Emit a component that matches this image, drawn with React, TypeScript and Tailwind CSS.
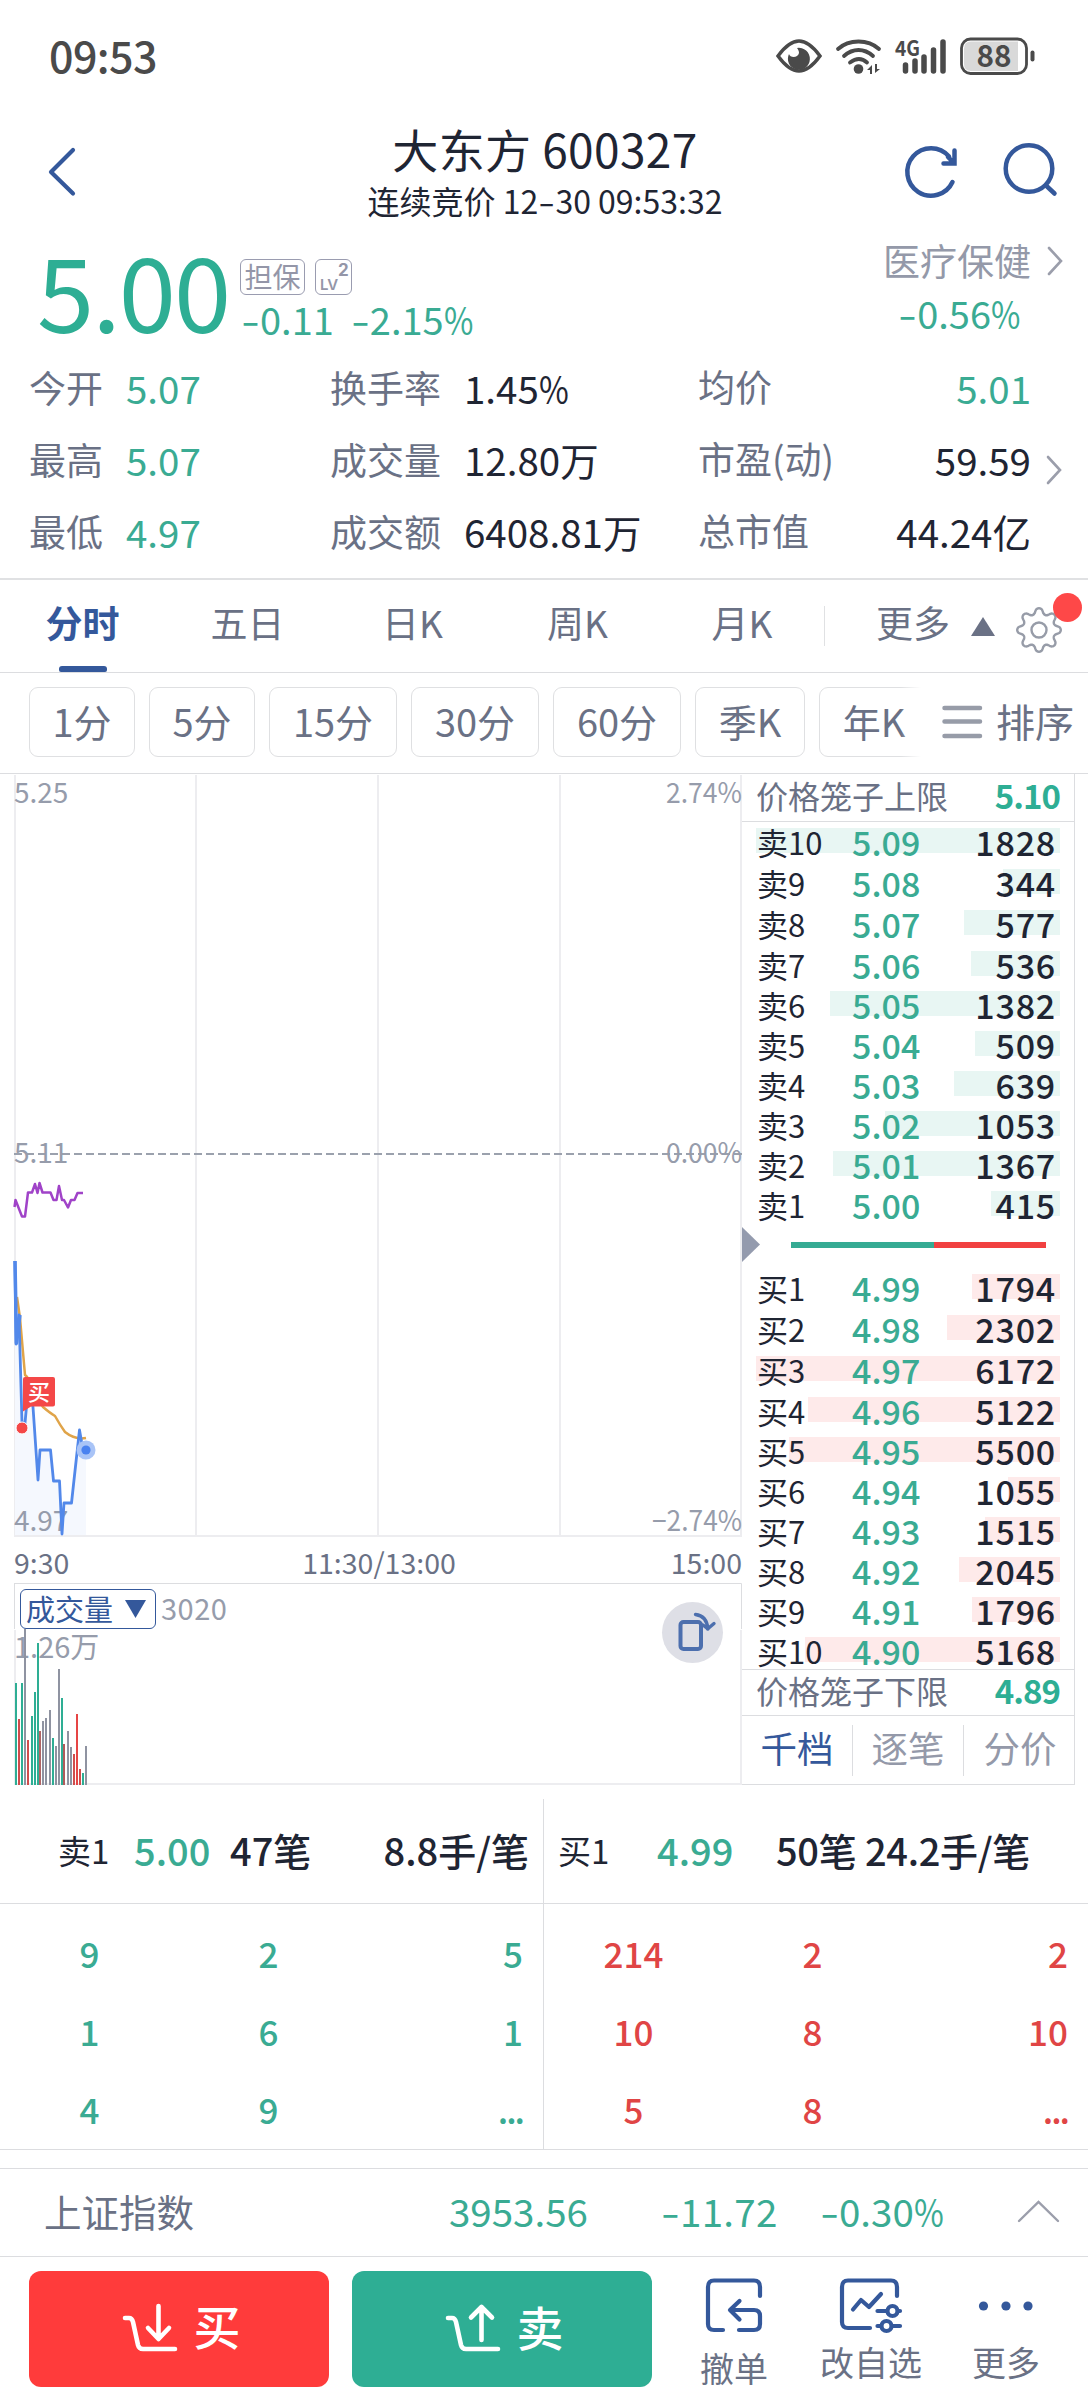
import type { ReactNode } from "react";

const GREEN = "#2eae94";
const GRAY = "#8f93a1";
const RED = "#d04c4c";

type Level = { name: string; price: string; qty: number };

const SELLS: Level[] = [
  { name: "卖10", price: "5.09", qty: 1828 },
  { name: "卖9", price: "5.08", qty: 344 },
  { name: "卖8", price: "5.07", qty: 577 },
  { name: "卖7", price: "5.06", qty: 536 },
  { name: "卖6", price: "5.05", qty: 1382 },
  { name: "卖5", price: "5.04", qty: 509 },
  { name: "卖4", price: "5.03", qty: 639 },
  { name: "卖3", price: "5.02", qty: 1053 },
  { name: "卖2", price: "5.01", qty: 1367 },
  { name: "卖1", price: "5.00", qty: 415 },
];

const BUYS: Level[] = [
  { name: "买1", price: "4.99", qty: 1794 },
  { name: "买2", price: "4.98", qty: 2302 },
  { name: "买3", price: "4.97", qty: 6172 },
  { name: "买4", price: "4.96", qty: 5122 },
  { name: "买5", price: "4.95", qty: 5500 },
  { name: "买6", price: "4.94", qty: 1055 },
  { name: "买7", price: "4.93", qty: 1515 },
  { name: "买8", price: "4.92", qty: 2045 },
  { name: "买9", price: "4.91", qty: 1796 },
  { name: "买10", price: "4.90", qty: 5168 },
];

// [x, height, colour] of each minute's volume
const VOLUMES: [number, number, string][] = [
  [15, 102, GREEN], [18, 66, RED], [21, 102, GREEN], [24, 156, GRAY], [27, 45, RED],
  [31, 69, GREEN], [34, 93, GREEN], [37, 142, GREEN], [39, 54, "#b06464"], [42, 64, GRAY],
  [45, 67, GRAY], [49, 75, GRAY], [52, 47, GREEN], [55, 39, GRAY], [58, 116, GRAY],
  [61, 87, GREEN], [63, 41, "#b05c5c"], [67, 54, GRAY], [70, 38, GRAY], [73, 31, RED],
  [76, 71, "#e64545"], [79, 16, RED], [82, 12, GREEN], [85, 39, GRAY],
];

function StatusBar() {
  return (
    <div className="flex h-[109px] items-center pl-[49px] text-[#4a4a4a]">
      <div className="w-[727px] text-[43px] font-medium leading-none tracking-[-0.600px]">09:53</div>
      <svg className="mt-[4px] overflow-visible" width="262" height="40" viewBox="0 0 262 40" fill="none">
        <path d="M2 19C10 8 17 4 23 4S36 8 44 19C36 30 29 34 23 34S10 30 2 19Z" stroke="#4a4a4a" strokeWidth="3.5" />
        <path d="M21 11a11 11 0 1 1-8 6c1 4 9 4 10-1 0-2-1-4-2-5Z" fill="#4a4a4a" />
        <path d="M62 12C73 2 92 2 103 12M68 19C77 11 88 11 97 19M74 25.500C80 21 86 21 91 25.500" stroke="#4a4a4a" strokeWidth="3.800" strokeLinecap="round" />
        <circle cx="82.500" cy="32" r="4.800" fill="#4a4a4a" />
        <path d="M91 33l5-5v9h-2v-4zM99 27v9l5-4h-3v-5z" fill="#4a4a4a" />
        <text x="119" y="18.500" fontSize="21" fontWeight="700" fill="#4a4a4a" textLength="25" lengthAdjust="spacingAndGlyphs">4G</text>
        <path d="M129.500 28v6M139 24v10M148 20v14M157.500 13v21M167 5v29" stroke="#4a4a4a" strokeWidth="5.500" strokeLinecap="round" />
        <rect x="185.500" y="2" width="65" height="34.500" rx="9" stroke="#4a4a4a" strokeWidth="2.800" />
        <path d="M195 4.500H242V34H195Q188 34 188 27V11.500Q188 4.500 195 4.500Z" fill="#d9d9d9" />
        <rect x="254.500" y="13.500" width="4" height="11" rx="2" fill="#4a4a4a" />
        <text x="218" y="30" textAnchor="middle" fontSize="31" fontWeight="700" fill="#4a4a4a" textLength="35" lengthAdjust="spacingAndGlyphs">88</text>
      </svg>
    </div>
  );
}

function Header() {
  return (
    <div className="flex h-[125px] items-start text-[#1f2533]">
      <div className="w-[273px] pl-[47px] pt-[37px]">
        <svg width="30" height="52" viewBox="0 0 30 52" fill="none">
          <path d="M26 4L4 26L26 47.500" stroke="#34589b" strokeWidth="4.200" strokeLinecap="round" strokeLinejoin="round" />
        </svg>
      </div>
      <div className="flex w-[544px] flex-col items-center gap-[13px] pt-[16px]">
        <div className="whitespace-pre text-[46px] leading-none tracking-[0.400px]">大东方 600327</div>
        <div className="whitespace-pre text-[32px] leading-[33px]">
          连续竞价 12<span className="mx-[3px] inline-block scale-x-150">-</span>30 09:53:32
        </div>
      </div>
      <div className="flex w-[271px] justify-end gap-[42px] pr-[29px] pt-[33px]">
        <svg width="58" height="60" viewBox="0 0 58 60" fill="none" stroke="#34589b" strokeWidth="4.500" strokeLinecap="round">
          <path d="M52.500 40A23.700 23.700 0 1 1 49 14.500" />
          <path d="M54.500 8.500V21.500H43.500M48 15L54 21" strokeLinejoin="miter" />
        </svg>
        <svg width="59" height="60" viewBox="0 0 59 60" fill="none" stroke="#34589b" strokeWidth="4.500" strokeLinecap="round">
          <circle cx="29" cy="26.500" r="23.300" />
          <path d="M46 43.500L54.500 51.500" />
        </svg>
      </div>
    </div>
  );
}

function Chevron() {
  return (
    <svg width="18" height="30" viewBox="0 0 18 30" fill="none">
      <path d="M3 2L15 15L3 28" stroke="#9b9eab" strokeWidth="2.600" strokeLinecap="round" />
    </svg>
  );
}

function Minus() {
  return <span className="mr-[1px] inline-block w-[17px] scale-x-[1.4] text-center">-</span>;
}

function Pct() {
  return <span className="mr-[-6px] inline-block origin-left scale-x-[0.84]">%</span>;
}

function Quote() {
  return (
    <div className="flex h-[116px] items-start">
      <div className="w-[240px] shrink-0 pl-[37px] pt-[3px] text-[103px] leading-none tracking-[-2px] text-[#2eae94]">5.00</div>
      <div className="w-[600px] shrink-0 pt-[25px]">
        <div className="flex gap-[10px]">
          <div className="flex h-[36px] w-[65px] items-center justify-center rounded-[6px] border border-[#9a9cb0] pb-[3px] text-[28px] leading-none text-[#9496a8]">担保</div>
          <div className="relative h-[36px] w-[37px] rounded-[6px] border border-[#9a9cb0] text-[#9496a8]">
            <span className="absolute left-[4px] top-[17px] font-[Inter] text-[15px] font-semibold leading-none">LV</span>
            <span className="absolute left-[22px] top-[2px] font-[Inter] text-[17px] font-bold leading-none">2</span>
          </div>
        </div>
        <div className="flex gap-[18px] pl-[2px] pt-[5px] text-[38px] leading-none text-[#3aab93]">
          <span><Minus />0.11</span>
          <span><Minus />2.15<Pct /></span>
        </div>
      </div>
      <div className="flex-1 text-[37px] leading-none">
        <div className="flex items-center justify-end gap-[15px] pr-[24px] pt-[8px]">
          <span className="whitespace-nowrap text-[#9499a9]">医疗保健</span>
          <Chevron />
        </div>
        <div className="pr-[68px] pt-[15px] text-right text-[38px] text-[#3aab93]"><Minus />0.56<Pct /></div>
      </div>
    </div>
  );
}

function Stats() {
  const rows: [string, string, string, ReactNode, string, string][] = [
    ["今开", "5.07", "换手率", <>1.45<Pct /></>, "均价", "5.01"],
    ["最高", "5.07", "成交量", "12.80万", "市盈(动)", "59.59"],
    ["最低", "4.97", "成交额", "6408.81万", "总市值", "44.24亿"],
  ];
  return (
    <div className="flex h-[230px] border-b-2 border-[#e0e1e3] pl-[29px] pt-[1px]">
      <div className="flex-1">
        {rows.map((r, i) => (
          <div key={r[2]} className="grid h-[72px] grid-cols-[97px_204px_134px_234px_1fr] items-center text-[38.500px] leading-none text-[#1f2533]">
            <span className="text-[37px] text-[#6a7185]">{r[0]}</span>
            <span className="text-[#3aab93]">{r[1]}</span>
            <span className="text-[37px] text-[#6a7185]">{r[2]}</span>
            <span>{r[3]}</span>
            <span className="flex justify-between">
              <span className="text-[37px] text-[#6a7185]">{r[4]}</span>
              <span className={i === 0 ? "text-[#3aab93]" : ""}>{r[5]}</span>
            </span>
          </div>
        ))}
      </div>
      <div className="flex w-[57px] items-start pl-[14px] pt-[104px]"><Chevron /></div>
    </div>
  );
}

function Gear() {
  const pts: string[] = [];
  const n = 128;
  for (let i = 0; i < n; i++) {
    const a = (i / n) * Math.PI * 2;
    const wave = Math.cos(a * 8);
    const r = 19 + 2.8 * Math.sign(wave) * Math.pow(Math.abs(wave), 0.65);
    pts.push(`${(24 + r * Math.sin(a)).toFixed(2)},${(24 - r * Math.cos(a)).toFixed(2)}`);
  }
  return (
    <svg width="48" height="48" viewBox="0 0 48 48" fill="none" stroke="#979ca8" strokeWidth="2.400" strokeLinejoin="round">
      <polygon points={pts.join(" ")} />
      <circle cx="24" cy="24" r="7.500" />
    </svg>
  );
}

function PeriodTabs() {
  return (
    <div className="grid h-[93px] grid-cols-[165px_165px_165px_165px_164px_1fr] border-b border-[#dcdde0] text-[37px] leading-none text-[#6a7185]">
      <div className="flex flex-col items-center justify-between pt-[24px] font-bold text-[#34589b]">
        分时
        <div className="h-[6px] w-[48px] rounded-t-[3px] rounded-b-[2px] bg-[#34589b]" />
      </div>
      <div className="pt-[24px] text-center">五日</div>
      <div className="pt-[24px] text-center">日K</div>
      <div className="pt-[24px] text-center">周K</div>
      <div className="pt-[24px] text-center">月K</div>
      <div className="flex items-start">
        <div className="mt-[26px] h-[40px] w-px bg-[#e0e1e3]" />
        <span className="ml-[51px] pt-[24px]">更多</span>
        <svg className="ml-[21px] mt-[37px]" width="24" height="19"><path d="M12 0L24 19H0Z" fill="#6a7185" /></svg>
        <div className="relative ml-[20px] mt-[26px]">
          <Gear />
          <div className="absolute left-[38px] top-[-13px] h-[29px] w-[29px] rounded-full bg-[#fe4848]" />
        </div>
      </div>
    </div>
  );
}

function Chip({ className, children }: { className: string; children: ReactNode }) {
  return (
    <div className={`flex h-[70px] shrink-0 items-center justify-center rounded-[9px] border border-[#dfe0e2] pb-[3px] ${className}`}>
      {children}
    </div>
  );
}

function MinuteChips() {
  return (
    <div className="flex h-[101px] border-b border-[#dcdde0] pl-[29px] pt-[14px] text-[38px] leading-none text-[#6a7185]">
      <div className="relative flex w-[892px] gap-[14px] overflow-hidden">
        <Chip className="w-[106px]">1分</Chip>
        <Chip className="w-[106px]">5分</Chip>
        <Chip className="w-[128px]">15分</Chip>
        <Chip className="w-[128px]">30分</Chip>
        <Chip className="w-[128px]">60分</Chip>
        <Chip className="w-[110px]">季K</Chip>
        <Chip className="w-[110px]">年K</Chip>
        <div className="absolute right-0 top-0 h-full w-[20px] bg-linear-to-r from-white/0 to-white" />
      </div>
      <div className="ml-[21px] flex h-[70px] items-center gap-[13px]">
        <svg width="41" height="34" viewBox="0 0 41 34" stroke="#979ca8" strokeWidth="4.500" strokeLinecap="round">
          <path d="M2.500 3H38M2.500 16.500H38M2.500 31H38" />
        </svg>
        <span className="pb-[3px] text-[39px]">排序</span>
      </div>
    </div>
  );
}

function PriceChart() {
  return (
    <svg className="overflow-visible" width="742" height="809" viewBox="0 774 742 809" fill="none">
      <g stroke="#ededf0" strokeWidth="2">
        <path d="M15 775V1535M196 775V1535M378 775V1535M560 775V1535M741 775V1535M14 1536H742" />
      </g>
      <path d="M14 1154H742" stroke="#9ba1ad" strokeWidth="2" strokeDasharray="8 4" />
      <path
        d="M15 1261L16 1344L20 1315L22 1423L26 1410L28 1400L33 1407L38 1480L40 1450H50.500L53.500 1481H59.500L62 1534L64 1503H71.500L74 1480L79.500 1430L83 1450H86V1535H15Z"
        fill="#f5f8fe"
      />
      <g fontSize="28" fill="#969cab">
        <text x="14" y="803">5.25</text>
        <text x="742" y="803" textAnchor="end" textLength="76" lengthAdjust="spacingAndGlyphs">2.74%</text>
        <text x="14" y="1163">5.11</text>
        <text x="742" y="1163" textAnchor="end" textLength="76" lengthAdjust="spacingAndGlyphs">0.00%</text>
        <text x="14" y="1531">4.97</text>
        <text x="742" y="1531" textAnchor="end" textLength="90" lengthAdjust="spacingAndGlyphs">−2.74%</text>
      </g>
      <g strokeWidth="2.500" strokeLinejoin="round">
        <path
          d="M14.500 1207L15.500 1200L22 1216.500H25L28 1192.500H32L35 1184L37.500 1193L39.500 1183L42.500 1192.500H50.500L53.500 1200H56.500L59 1186L62 1200H64L68 1207.500L71 1200H74.500L77.500 1193H83"
          stroke="#a043c8"
        />
        <path
          d="M17 1297L20 1318L25 1375C30 1377 35 1395 43 1407Q50 1413 55 1416Q60 1425 65 1432Q75 1440 86 1438"
          stroke="#e0a449"
        />
        <path
          d="M15 1261L16 1344L19 1315L22 1423L25 1423L28 1390L33 1407L38 1480L40 1450H50.500L53.500 1481H59.500L62 1534L64 1503H71.500L74 1480L79.500 1430L83 1450H86"
          stroke="#5288ea"
          strokeWidth="2.800"
        />
        <path d="M15 1261L16.500 1343L20 1315" stroke="#5288ea" strokeWidth="3.500" />
      </g>
      <circle cx="86" cy="1450" r="9.500" fill="#a9c4f7" />
      <circle cx="86" cy="1450" r="4.600" fill="#4a82f0" />
      <path d="M25 1377H53Q55 1377 55 1379V1404.500Q55 1406.500 53 1406.500H31L23 1411.500V1379Q23 1377 25 1377Z" fill="#f44848" />
      <text x="39" y="1400" textAnchor="middle" fontSize="22" fontWeight="500" fill="#fff">买</text>
      <circle cx="22" cy="1428" r="6" fill="#f44848" stroke="#fff" strokeWidth="1" />
      <g fontSize="28.500" fill="#6a7185">
        <text x="14" y="1574">9:30</text>
        <text x="379" y="1574" textAnchor="middle">11:30/13:00</text>
        <text x="742" y="1574" textAnchor="end">15:00</text>
      </g>
    </svg>
  );
}

function VolumeChart() {
  return (
    <div className="relative h-[202px] w-[742px]">
      <svg width="742" height="202" viewBox="0 1583 742 202">
        <path d="M14 1583.500H741.500V1629M14.500 1583V1629" fill="none" stroke="#dcdde0" />
        <path d="M15 1630V1784H741V1630" fill="none" stroke="#ededf0" strokeWidth="2" />
        <text x="14" y="1658" fontSize="29" fill="#969cab">1.26万</text>
        {VOLUMES.map(([x, h, c]) => (
          <rect key={x} x={x} y={1785 - h} width="2" height={h} fill={c} />
        ))}
      </svg>
      <div className="absolute left-[20px] top-[6px] flex items-center gap-[5px] leading-none">
        <div className="flex h-[40px] w-[136px] items-center justify-between rounded-[6px] border border-[#34589b] bg-white pl-[5px] pr-[9px] text-[29px] text-[#34589b]">
          <span className="pb-[2px]">成交量</span>
          <svg width="21" height="18"><path d="M0 0H21L10.500 18Z" fill="#34589b" /></svg>
        </div>
        <span className="pb-[3px] text-[29px] tracking-[0.500px] text-[#969cab]">3020</span>
      </div>
      <div className="absolute left-[662px] top-[19px] h-[61px] w-[61px] rounded-full bg-[#dedfe6]">
        <svg width="61" height="61" viewBox="0 0 61 61" fill="none" stroke="#4c6fae" strokeLinecap="round" strokeLinejoin="round">
          <rect x="18.500" y="20" width="20.500" height="27" rx="3" strokeWidth="4" />
          <path d="M33.500 12.500Q44.500 13.500 46 27M45.500 27L52 21.500M46 27L41 23" strokeWidth="3.400" />
        </svg>
      </div>
    </div>
  );
}

function BookRow({ level, max, tint }: { level: Level; max: number; tint: string }) {
  return (
    <div className="relative h-[40px] shrink-0 first:h-[41px] nth-[2]:h-[41px] nth-[3]:h-[41px]">
      <div className={`absolute right-[14px] top-0 h-[24.500px] ${tint}`} style={{ width: Math.round((level.qty / max) * 304) }} />
      <div className="relative flex h-[27px] items-center pl-[15px] pr-[18px] leading-none text-[#1f2533]">
        <span className="w-[95px] whitespace-nowrap pb-[1px] text-[31px]">{level.name}</span>
        <span className="text-[34px] font-medium text-[#3aab93]">{level.price}</span>
        <span className="flex-1 text-right text-[34px] font-medium tracking-[0.800px]">{level.qty}</span>
      </div>
    </div>
  );
}

function CageRow({ label, value, className }: { label: string; value: string; className: string }) {
  return (
    <div className={`flex shrink-0 items-center justify-between pl-[14px] pr-[14px] leading-none ${className}`}>
      <span className="text-[32px] text-[#6a7185]">{label}</span>
      <span className="text-[33px] font-bold tracking-[-1px] text-[#2eae94]">{value}</span>
    </div>
  );
}

function OrderBook() {
  return (
    <div className="flex h-[1011px] w-[333px] flex-col border-b border-r border-[#dcdde0]">
      <CageRow label="价格笼子上限" value="5.10" className="h-[48px] border-b border-[#dcdde0] pb-[5px]" />
      <div className="flex h-[405px] shrink-0 flex-col pt-[6px]">
        {SELLS.map((l) => <BookRow key={l.name} level={l} max={1828} tint="bg-[#e8f6f3]" />)}
      </div>
      <div className="flex h-[35px] shrink-0 items-center">
        <svg width="18" height="35"><path d="M0 0L18 17.500L0 35Z" fill="#949bae" /></svg>
        <div className="ml-[31px] flex h-[6px] w-[255px]">
          <div className="w-[143px] bg-[#35ab93]" />
          <div className="flex-1 bg-[#f14141]" />
        </div>
      </div>
      <div className="flex h-[407px] shrink-0 flex-col pt-[12px]">
        {BUYS.map((l) => <BookRow key={l.name} level={l} max={6172} tint="bg-[#feeaea]" />)}
      </div>
      <CageRow label="价格笼子下限" value="4.89" className="h-[46px] border-t border-[#dcdde0] pb-[5px]" />
      <div className="flex flex-1 items-center border-t border-[#dcdde0] text-center text-[36.500px] leading-none text-[#9499a9]">
        <span className="w-[110px] pb-[3px] text-[#34589b]">千档</span>
        <div className="h-[51px] w-px bg-[#dcdde0]" />
        <span className="w-[110px] pb-[3px]">逐笔</span>
        <div className="h-[51px] w-px bg-[#dcdde0]" />
        <span className="flex-1 pb-[3px] pl-[2px]">分价</span>
      </div>
    </div>
  );
}

function QueueGrid({ rows, className }: { rows: string[][]; className: string }) {
  return (
    <div className={`flex flex-col pt-[9px] text-[35px] font-medium leading-none ${className}`}>
      {rows.map((r, i) => (
        <div key={i} className="grid h-[78px] grid-cols-[179px_179px_1fr] items-center pr-[20px]">
          <span className="text-center">{r[0]}</span>
          <span className="text-center">{r[1]}</span>
          <span className={r[2] === "..." ? "text-right tracking-[-2px]" : "text-right"}>{r[2]}</span>
        </div>
      ))}
    </div>
  );
}

function OrderQueue() {
  return (
    <div className="mt-[14px] grid h-[351px] grid-cols-[544px_544px] border-b border-[#dcdde0] text-[38px] font-medium leading-none text-[#1f2533]">
      <div className="border-r border-[#dcdde0]">
        <div className="flex h-[105px] items-center border-b border-[#dcdde0] pb-[2px] pl-[58px]">
          <span className="w-[76px] text-[33px] font-normal">卖1</span>
          <span className="w-[96px] text-[#3aab93]">5.00</span>
          <span>47笔</span>
          <span className="flex-1 pr-[14px] text-right">8.8手/笔</span>
        </div>
        <QueueGrid className="text-[#3aab93]" rows={[["9", "2", "5"], ["1", "6", "1"], ["4", "9", "..."]]} />
      </div>
      <div>
        <div className="flex h-[105px] items-center border-b border-[#dcdde0] pb-[2px] pl-[14px]">
          <span className="w-[99px] text-[33px] font-normal">买1</span>
          <span className="w-[119px] text-[#3aab93]">4.99</span>
          <span className="tracking-[-0.300px]">50笔</span>
          <span className="flex-1 pr-[58px] text-right tracking-[-0.300px]">24.2手/笔</span>
        </div>
        <QueueGrid className="text-[#e04545]" rows={[["214", "2", "2"], ["10", "8", "10"], ["5", "8", "..."]]} />
      </div>
    </div>
  );
}

function IndexBar() {
  return (
    <div className="mt-[18px] flex h-[89px] items-center border-y border-[#dcdde0] pb-[4px] pl-[44px] text-[38.500px] leading-none text-[#3aab93]">
      <span className="w-[405px] text-[37.500px] text-[#6a7185]">上证指数</span>
      <span className="w-[213px]">3953.56</span>
      <span className="w-[159px] whitespace-nowrap tracking-[0.300px]"><Minus />11.72</span>
      <span className="w-[195px] whitespace-nowrap"><Minus />0.30<Pct /></span>
      <svg width="44" height="26" viewBox="0 0 44 26" fill="none"><path d="M3 23L22.500 4L42 23" stroke="#9b9eab" strokeWidth="2.400" strokeLinecap="round" /></svg>
    </div>
  );
}

function TradeIcon({ up }: { up?: boolean }) {
  return (
    <svg width="58" height="52" viewBox="0 0 58 52" fill="none" stroke="#fff" strokeWidth="4.600" strokeLinecap="round" strokeLinejoin="round">
      <path d="M4 15H8Q11 15 12 19L17 42Q18 46 22 46H54" />
      {up ? <path d="M37.500 37V4M27 14.500L37.500 4L48 14.500" /> : <path d="M37.500 3V35M27 25L37.500 36L48 25" />}
    </svg>
  );
}

function BottomBar() {
  return (
    <div className="flex h-[143px] items-start pl-[29px] pt-[14px] leading-none">
      <div className="flex h-[116px] w-[300px] items-center justify-center gap-[15px] rounded-[12px] bg-[#ff3b3b] pl-[3px] text-[47px] font-medium text-white">
        <TradeIcon /><span className="pb-[10px]">买</span>
      </div>
      <div className="ml-[23px] flex h-[116px] w-[300px] items-center justify-center gap-[15px] rounded-[12px] bg-[#2eae94] pl-[3px] text-[47px] font-medium text-white">
        <TradeIcon up /><span className="pb-[8px]">卖</span>
      </div>
      <div className="ml-[32px] grid grid-cols-[100px_174px_96px] text-center text-[34px] text-[#6a7185]">
        <div className="flex flex-col items-center pt-[5px]">
          <svg width="60" height="58" viewBox="0 0 60 58" fill="none" stroke="#34589b" strokeWidth="4.200" strokeLinecap="round" strokeLinejoin="round">
            <path d="M19 54H10Q4 54 4 48V11Q4 4.500 10 4.500H50Q56 4.500 56 11V20" />
            <path d="M35 54H50Q56 54 56 48V40Q56 34 50 34H27M35.500 25L26 34L35.500 43.500" />
          </svg>
          <span className="pt-[17px]">撤单</span>
        </div>
        <div className="flex flex-col items-center pt-[5px]">
          <svg width="64" height="58" viewBox="0 0 64 58" fill="none" stroke="#34589b" strokeWidth="4.200" strokeLinecap="round" strokeLinejoin="round">
            <path d="M31 52H9Q3 52 3 46V11Q3 4.500 9 4.500H52Q58 4.500 58 11V20" />
            <path d="M14 33.500L22 24L30 31L42 18" />
            <path d="M38.500 35H47M59 35H61" />
            <circle cx="53.500" cy="35" r="5" />
            <path d="M38.500 50H41M53 50H61" />
            <circle cx="47.500" cy="50" r="5" />
          </svg>
          <span className="whitespace-nowrap pt-[11px]">改自选</span>
        </div>
        <div className="flex flex-col items-center pt-[5px]">
          <svg width="60" height="58" viewBox="0 0 60 58" fill="#34589b">
            <circle cx="7.500" cy="30" r="4.600" /><circle cx="30" cy="30" r="4.600" /><circle cx="52" cy="30" r="4.600" />
          </svg>
          <span className="pt-[11px]">更多</span>
        </div>
      </div>
    </div>
  );
}

export default function App() {
  return (
    <div className="flex h-[2400px] w-[1088px] flex-col overflow-hidden bg-white font-['Noto_Sans_CJK_SC',sans-serif] antialiased">
      <StatusBar />
      <Header />
      <Quote />
      <Stats />
      <PeriodTabs />
      <MinuteChips />
      <div className="flex">
        <div className="flex w-[742px] flex-col">
          <PriceChart />
          <VolumeChart />
        </div>
        <OrderBook />
      </div>
      <OrderQueue />
      <IndexBar />
      <BottomBar />
    </div>
  );
}
